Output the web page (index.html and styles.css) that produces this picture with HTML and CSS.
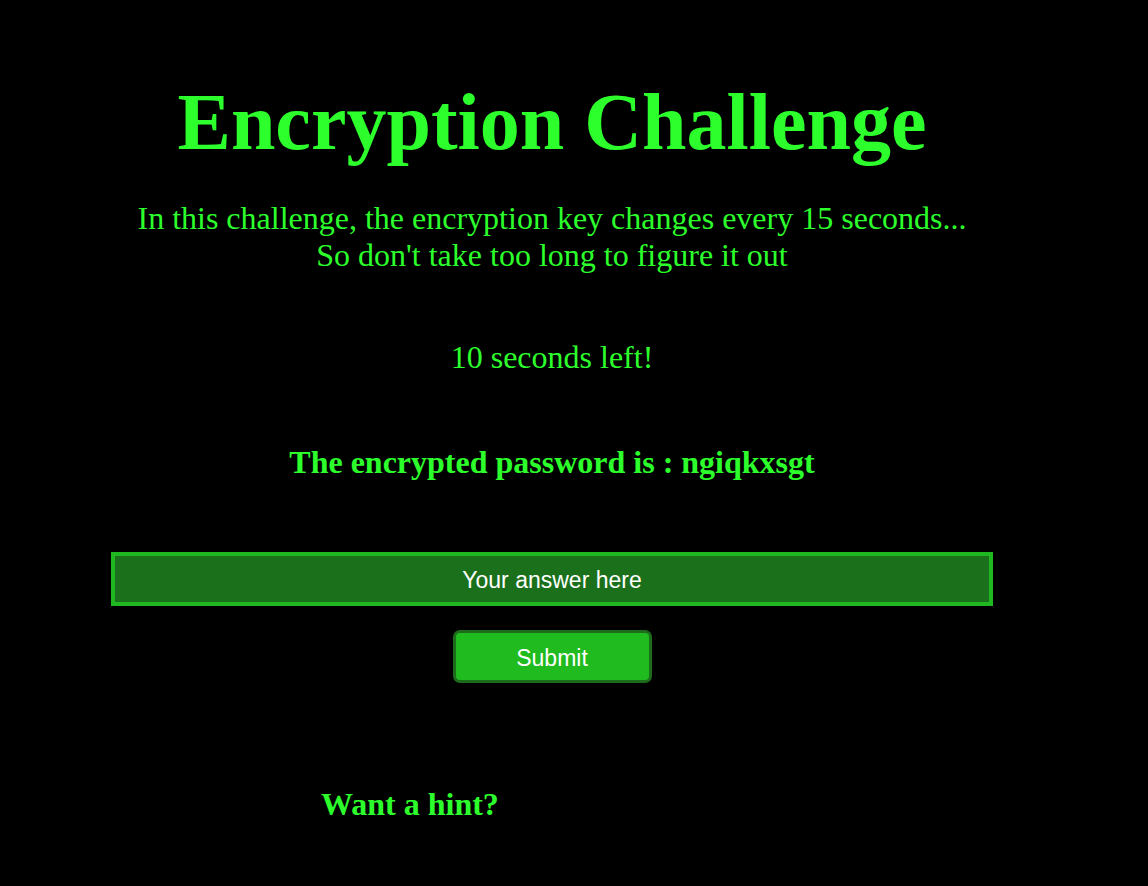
FILE: index.html
```html
<!DOCTYPE html>
<html lang="en">
<head>
<meta charset="utf-8">
<title>Encryption Challenge</title>
<link rel="stylesheet" href="styles.css">
</head>
<body>
<main class="page">
  <h1 class="title">Encryption Challenge</h1>
  <p class="intro">In this challenge, the encryption key changes every 15 seconds...<br>So don't take too long to figure it out</p>
  <p class="timer">10 seconds left!</p>
  <p class="cipher">The encrypted password is : ngiqkxsgt</p>
  <form class="answer-form">
    <input class="answer" type="text" placeholder="Your answer here">
    <button class="submit" type="button">Submit</button>
  </form>
  <p class="hint">Want a hint?</p>
</main>
</body>
</html>
```
FILE: styles.css
```css
html, body {
  margin: 0;
  padding: 0;
  background: #000;
}

body {
  font-family: "Liberation Serif", "Times New Roman", serif;
  color: #2cff2c;
}

.page {
  width: 882px;
  margin-left: 111px;
  padding-top: 76px;
  text-align: center;
}

.title {
  margin: 0;
  font-size: 80px;
  line-height: 92px;
  font-weight: bold;
}

.intro {
  margin: 32px 0 0;
  font-size: 32px;
  line-height: 36.6px;
}

.timer {
  margin: 66px 0 0;
  font-size: 32px;
  line-height: 36.8px;
}

.cipher {
  margin: 68px 0 0;
  font-size: 32px;
  line-height: 36.8px;
  font-weight: bold;
}

.answer-form {
  margin-top: 71px;
  display: flex;
  flex-direction: column;
  align-items: center;
  gap: 24px;
}

.answer {
  box-sizing: border-box;
  width: 882px;
  height: 54px;
  margin: 0;
  padding: 4px 2px 0;
  border: 4px solid #20b820;
  background: #1b701b;
  color: #fff;
  font-family: "Liberation Sans", Arial, sans-serif;
  font-size: 23px;
  text-align: center;
  outline: none;
}

.answer::placeholder {
  color: #fff;
  opacity: 1;
}

.submit {
  box-sizing: border-box;
  width: 199px;
  height: 53px;
  margin: 0;
  padding: 4px 6px 0;
  border: 3px solid #1c6c1c;
  border-radius: 7px;
  background: #1fbb1f;
  color: #fff;
  font-family: "Liberation Sans", Arial, sans-serif;
  font-size: 23px;
  cursor: pointer;
}

.hint {
  margin: 103px 0 0;
  padding-left: 210px;
  text-align: left;
  font-size: 32px;
  line-height: 36.8px;
  font-weight: bold;
}
```
